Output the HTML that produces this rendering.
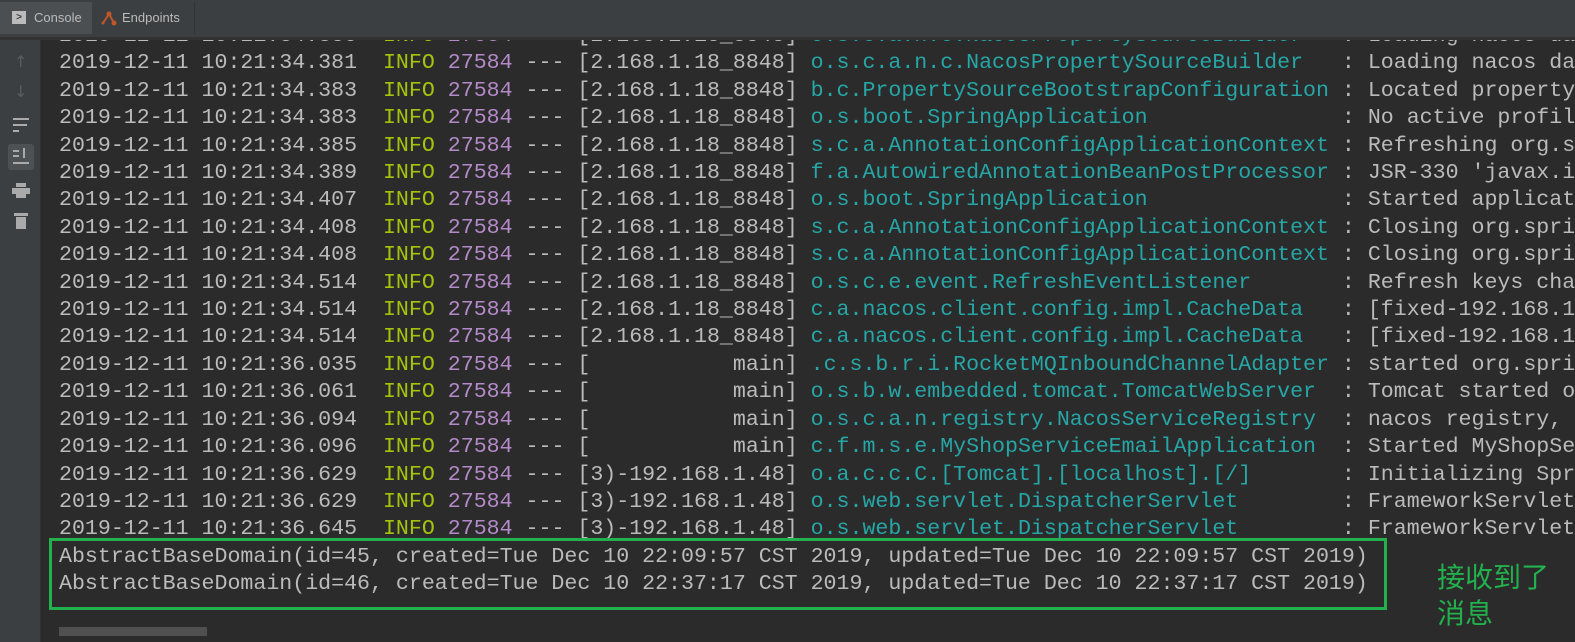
<!DOCTYPE html>
<html><head><meta charset="utf-8"><style>
body{margin:0;width:1575px;height:641px;overflow:hidden;background:#2b2b2b;position:relative;font-family:"Liberation Mono",monospace;}
.top{position:absolute;left:0;top:0;width:1575px;height:37px;background:#3c3f41;border-bottom:3px solid #323232;z-index:5;}
.tab{position:absolute;top:2px;height:32px;font-family:"Liberation Sans",sans-serif;font-size:13px;color:#bbb;line-height:32px;}
.gut{position:absolute;left:0;top:40px;width:40px;height:602px;background:#3c3f41;border-right:1px solid #323232;z-index:4;}
.log{position:absolute;left:59px;top:23px;font-size:21.6px;color:#bbbbbb;white-space:pre;line-height:27.4px;}
.i{color:#a6c30b}.p{color:#b48ac9}.c{color:#26a6a6}
.box{position:absolute;left:49px;top:538px;width:1332px;height:66px;border:3px solid #22b14c;}
.cn{position:absolute;left:1437px;font-family:"Noto Sans CJK SC",sans-serif;font-size:28px;color:#22b14c;line-height:40px;}
</style></head><body>
<div class="top">
<div class="tab" style="left:0;width:92px;background:#4b4f52"><span style="position:absolute;left:12px;top:9px;width:14px;height:13px;background:#bbb;color:#3c3f41;font-size:10px;line-height:13px;text-align:center;font-weight:bold">&gt;</span><span style="position:absolute;left:34px">Console</span></div>
<div class="tab" style="left:94px;width:100px;border-right:1px solid #333"><svg style="position:absolute;left:6px;top:8px" width="18" height="16"><path d="M3 13 L9 4 L14 13" stroke="#c0562a" stroke-width="2" fill="none"/><circle cx="9" cy="4" r="2.5" fill="#c0562a"/><circle cx="14" cy="13" r="2.5" fill="#c0562a"/><circle cx="3" cy="13" r="1.5" fill="#c0562a"/></svg><span style="position:absolute;left:28px">Endpoints</span></div>
</div>
<div class="gut">
<div style="position:absolute;left:14px;top:12px;color:#5a5d60;font-size:16px;font-family:'DejaVu Sans'">↑</div>
<div style="position:absolute;left:14px;top:42px;color:#5a5d60;font-size:16px;font-family:'DejaVu Sans'">↓</div>
<div style="position:absolute;left:13px;top:78px;width:16px;height:2px;background:#aaa"></div>
<div style="position:absolute;left:13px;top:84px;width:14px;height:2px;background:#aaa"></div>
<div style="position:absolute;left:13px;top:90px;width:6px;height:2px;background:#aaa"></div>
<div style="position:absolute;left:8px;top:104px;width:26px;height:26px;background:#4d5154;border-radius:3px"></div>
<div style="position:absolute;left:13px;top:122px;width:16px;height:2px;background:#aaa"></div>
<div style="position:absolute;left:13px;top:110px;width:6px;height:2px;background:#aaa"></div>
<div style="position:absolute;left:13px;top:115px;width:6px;height:2px;background:#aaa"></div>
<div style="position:absolute;left:23px;top:108px;width:2px;height:10px;background:#aaa"></div>
<div style="position:absolute;left:16px;top:143px;width:10px;height:4px;background:#aaa"></div>
<div style="position:absolute;left:12px;top:148px;width:18px;height:6px;background:#aaa"></div>
<div style="position:absolute;left:16px;top:154px;width:10px;height:4px;background:#aaa"></div>
<div style="position:absolute;left:14px;top:173px;width:14px;height:3px;background:#aaa"></div>
<div style="position:absolute;left:16px;top:177px;width:10px;height:12px;background:#aaa"></div>
</div>
<div class="log">2019-12-11 10:21:34.380  <span class="i">INFO</span> <span class="p">27584</span> --- [2.168.1.18_8848] <span class="c">o.s.c.a.n.c.NacosPropertySourceBuilder</span>   : Loading nacos da
2019-12-11 10:21:34.381  <span class="i">INFO</span> <span class="p">27584</span> --- [2.168.1.18_8848] <span class="c">o.s.c.a.n.c.NacosPropertySourceBuilder</span>   : Loading nacos da
2019-12-11 10:21:34.383  <span class="i">INFO</span> <span class="p">27584</span> --- [2.168.1.18_8848] <span class="c">b.c.PropertySourceBootstrapConfiguration</span> : Located property
2019-12-11 10:21:34.383  <span class="i">INFO</span> <span class="p">27584</span> --- [2.168.1.18_8848] <span class="c">o.s.boot.SpringApplication</span>               : No active profil
2019-12-11 10:21:34.385  <span class="i">INFO</span> <span class="p">27584</span> --- [2.168.1.18_8848] <span class="c">s.c.a.AnnotationConfigApplicationContext</span> : Refreshing org.s
2019-12-11 10:21:34.389  <span class="i">INFO</span> <span class="p">27584</span> --- [2.168.1.18_8848] <span class="c">f.a.AutowiredAnnotationBeanPostProcessor</span> : JSR-330 'javax.i
2019-12-11 10:21:34.407  <span class="i">INFO</span> <span class="p">27584</span> --- [2.168.1.18_8848] <span class="c">o.s.boot.SpringApplication</span>               : Started applicat
2019-12-11 10:21:34.408  <span class="i">INFO</span> <span class="p">27584</span> --- [2.168.1.18_8848] <span class="c">s.c.a.AnnotationConfigApplicationContext</span> : Closing org.spri
2019-12-11 10:21:34.408  <span class="i">INFO</span> <span class="p">27584</span> --- [2.168.1.18_8848] <span class="c">s.c.a.AnnotationConfigApplicationContext</span> : Closing org.spri
2019-12-11 10:21:34.514  <span class="i">INFO</span> <span class="p">27584</span> --- [2.168.1.18_8848] <span class="c">o.s.c.e.event.RefreshEventListener</span>       : Refresh keys cha
2019-12-11 10:21:34.514  <span class="i">INFO</span> <span class="p">27584</span> --- [2.168.1.18_8848] <span class="c">c.a.nacos.client.config.impl.CacheData</span>   : [fixed-192.168.1
2019-12-11 10:21:34.514  <span class="i">INFO</span> <span class="p">27584</span> --- [2.168.1.18_8848] <span class="c">c.a.nacos.client.config.impl.CacheData</span>   : [fixed-192.168.1
2019-12-11 10:21:36.035  <span class="i">INFO</span> <span class="p">27584</span> --- [           main] <span class="c">.c.s.b.r.i.RocketMQInboundChannelAdapter</span> : started org.spri
2019-12-11 10:21:36.061  <span class="i">INFO</span> <span class="p">27584</span> --- [           main] <span class="c">o.s.b.w.embedded.tomcat.TomcatWebServer</span>  : Tomcat started o
2019-12-11 10:21:36.094  <span class="i">INFO</span> <span class="p">27584</span> --- [           main] <span class="c">o.s.c.a.n.registry.NacosServiceRegistry</span>  : nacos registry, 
2019-12-11 10:21:36.096  <span class="i">INFO</span> <span class="p">27584</span> --- [           main] <span class="c">c.f.m.s.e.MyShopServiceEmailApplication</span>  : Started MyShopSe
2019-12-11 10:21:36.629  <span class="i">INFO</span> <span class="p">27584</span> --- [3)-192.168.1.48] <span class="c">o.a.c.c.C.[Tomcat].[localhost].[/]</span>       : Initializing Spr
2019-12-11 10:21:36.629  <span class="i">INFO</span> <span class="p">27584</span> --- [3)-192.168.1.48] <span class="c">o.s.web.servlet.DispatcherServlet</span>        : FrameworkServlet
2019-12-11 10:21:36.645  <span class="i">INFO</span> <span class="p">27584</span> --- [3)-192.168.1.48] <span class="c">o.s.web.servlet.DispatcherServlet</span>        : FrameworkServlet
AbstractBaseDomain(id=45, created=Tue Dec 10 22:09:57 CST 2019, updated=Tue Dec 10 22:09:57 CST 2019)
AbstractBaseDomain(id=46, created=Tue Dec 10 22:37:17 CST 2019, updated=Tue Dec 10 22:37:17 CST 2019)</div>
<div class="box"></div>
<div class="cn" style="top:556px">接收到了</div>
<div class="cn" style="top:592px">消息</div>
<div style="position:absolute;left:59px;top:627px;width:148px;height:9px;background:#505050"></div>
</body></html>
